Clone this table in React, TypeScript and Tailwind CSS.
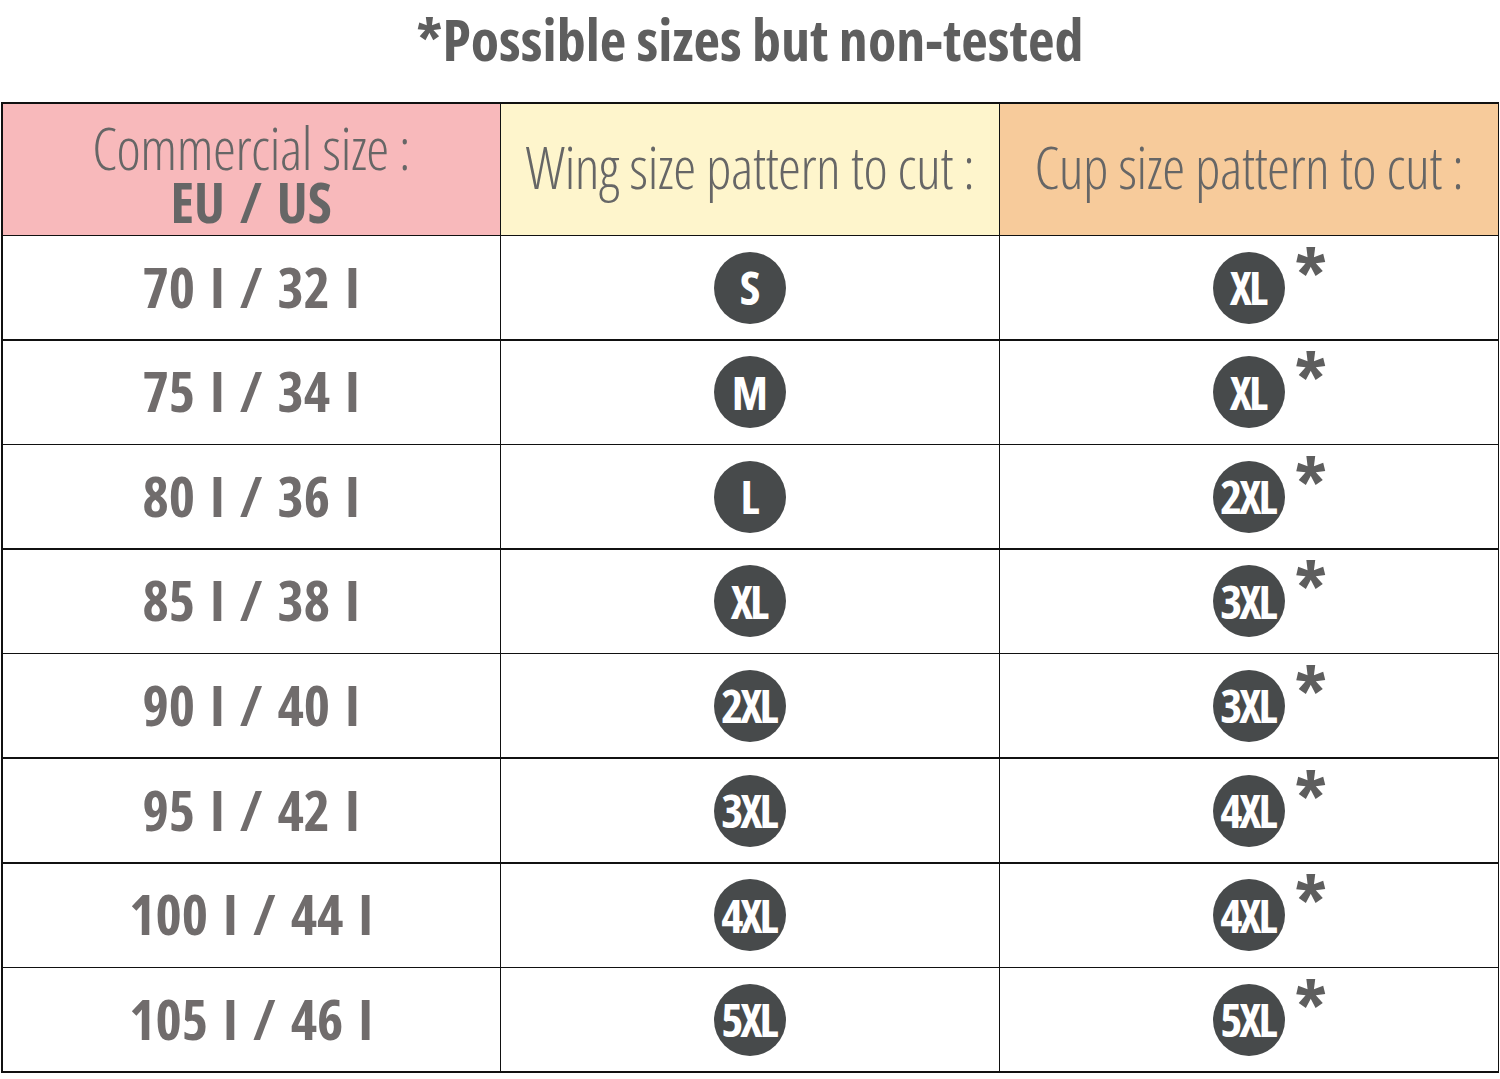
import React from "react";

const rows: [string, string, string][] = [
  ["70 I / 32 I", "S", "XL"],
  ["75 I / 34 I", "M", "XL"],
  ["80 I / 36 I", "L", "2XL"],
  ["85 I / 38 I", "XL", "3XL"],
  ["90 I / 40 I", "2XL", "3XL"],
  ["95 I / 42 I", "3XL", "4XL"],
  ["100 I / 44 I", "4XL", "4XL"],
  ["105 I / 46 I", "5XL", "5XL"],
];

function Badge({ label }: { label: string }) {
  return (
    <div className="w-[72px] h-[72px] rounded-full bg-[#474a4b] flex items-center justify-center">
      <span className="text-white font-bold text-[47px] leading-none [font-stretch:75%] tracking-[-3px] mr-[3px]">
        {label}
      </span>
    </div>
  );
}

export default function App() {
  return (
    <div className="w-[1500px] h-[1079px] bg-white font-['Open_Sans',sans-serif] [font-stretch:75%] overflow-hidden">
      <div className="h-[102px] flex justify-center">
        <h1 className="text-[58px] leading-[78px] font-bold text-[#5e5e5e]">
          *Possible sizes but non-tested
        </h1>
      </div>
      <div className="ml-px w-[1498px] bg-[#111] p-[1.5px] grid grid-cols-3 gap-[1.5px] grid-rows-[131px_repeat(8,103.1px)]">
        <div className="bg-[#f8b9bb] flex flex-col items-center justify-center text-[#666666]">
          <div className="text-[58px] font-light leading-[54px] tracking-[-0.5px] mt-[12px]">Commercial size :</div>
          <div className="text-[55px] font-bold leading-[54px] [word-spacing:5px]">EU / US</div>
        </div>
        <div className="bg-[#fef5cc] flex items-center justify-center text-[#666666]">
          <div className="text-[58px] font-light leading-none tracking-[-0.5px] mt-[-4px]">Wing size pattern to cut :</div>
        </div>
        <div className="bg-[#f7cb9b] flex items-center justify-center text-[#666666]">
          <div className="text-[58px] font-light leading-none tracking-[-0.5px] mt-[-4px]">Cup size pattern to cut :</div>
        </div>
        {rows.map(([size, wing, cup], i) => (
          <React.Fragment key={i}>
            <div className="bg-white flex items-center justify-center">
              <span className="text-[56px] font-bold text-[#706c6c] leading-none [word-spacing:5px] mt-[-4px]">{size}</span>
            </div>
            <div className="bg-white flex items-center justify-center">
              <Badge label={wing} />
            </div>
            <div className="bg-white flex items-center justify-center">
              <div className="relative">
                <Badge label={cup} />
                <span className="absolute left-[82px] top-[-14px] text-[72px] font-bold leading-none text-[#5e5e5e]">*</span>
              </div>
            </div>
          </React.Fragment>
        ))}
      </div>
    </div>
  );
}
